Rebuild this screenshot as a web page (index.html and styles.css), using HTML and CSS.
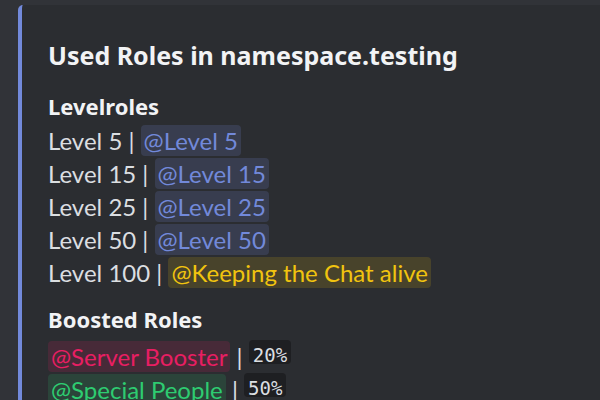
FILE: index.html
```html
<!DOCTYPE html>
<html>
<head>
<meta charset="utf-8">
<link rel="stylesheet" href="styles.css">
</head>
<body>
<div class="embed">
  <div class="title">Used Roles in namespace.testing</div>
  <div class="desc">
    <div class="heading first">Levelroles</div>
    <div class="line">Level 5 | <span class="mention blue">@Level 5</span></div>
    <div class="line">Level 15 | <span class="mention blue">@Level 15</span></div>
    <div class="line">Level 25 | <span class="mention blue">@Level 25</span></div>
    <div class="line">Level 50 | <span class="mention blue">@Level 50</span></div>
    <div class="line">Level 100 | <span class="mention yellow">@Keeping the Chat alive</span></div>
    <div class="heading">Boosted Roles</div>
    <div class="line boost first-row"><span class="mention pink">@Server Booster</span> | <code class="code">20%</code></div>
    <div class="line boost"><span class="mention green">@Special People</span> | <code class="code">50%</code></div>
  </div>
</div>
</body>
</html>
```
FILE: styles.css
```css
html, body {
  margin: 0;
  padding: 0;
}
body {
  background: #313338;
  width: 600px;
  height: 400px;
  overflow: hidden;
  font-family: Lato, "Noto Sans", sans-serif;
  color: #dbdee1;
}
.embed {
  margin: 5px 0 0 18px;
  width: 640px;
  height: 460px;
  background: #2b2d31;
  border-left: 4px solid #7289da;
  border-radius: 5px 0 0 5px;
  padding: 35px 0 0 26px;
  box-sizing: border-box;
}
.title {
  font-family: "Noto Sans", Lato, sans-serif;
  font-size: 25px;
  font-weight: 700;
  line-height: 30px;
  color: #f2f3f5;
  white-space: nowrap;
}
.heading {
  font-family: "Noto Sans", Lato, sans-serif;
  font-size: 22px;
  font-weight: 700;
  line-height: 30px;
  color: #f2f3f5;
  margin-top: 15px;
  margin-bottom: 3px;
}
.heading.first {
  margin-top: 21px;
}
.line {
  font-size: 24px;
  line-height: 33px;
  white-space: nowrap;
}
.line.first-row {
  margin-top: 6px;
}
.mention {
  padding: 1px 3px;
  border-radius: 4px;
}
.blue {
  color: #7289da;
  background: rgba(114, 137, 218, 0.18);
}
.yellow {
  color: #f1c40f;
  background: rgba(241, 196, 15, 0.15);
}
.pink {
  color: #e91e63;
  background: rgba(233, 30, 99, 0.15);
}
.green {
  color: #2ecc71;
  background: rgba(46, 204, 113, 0.15);
}
.code {
  display: inline-block;
  font-family: "DejaVu Sans Mono", monospace;
  font-size: 19px;
  height: 24px;
  line-height: 30px;
  background: #1e1f22;
  color: #dbdee1;
  padding: 0 4px;
  border-radius: 4px;
  vertical-align: 4px;
}
```
